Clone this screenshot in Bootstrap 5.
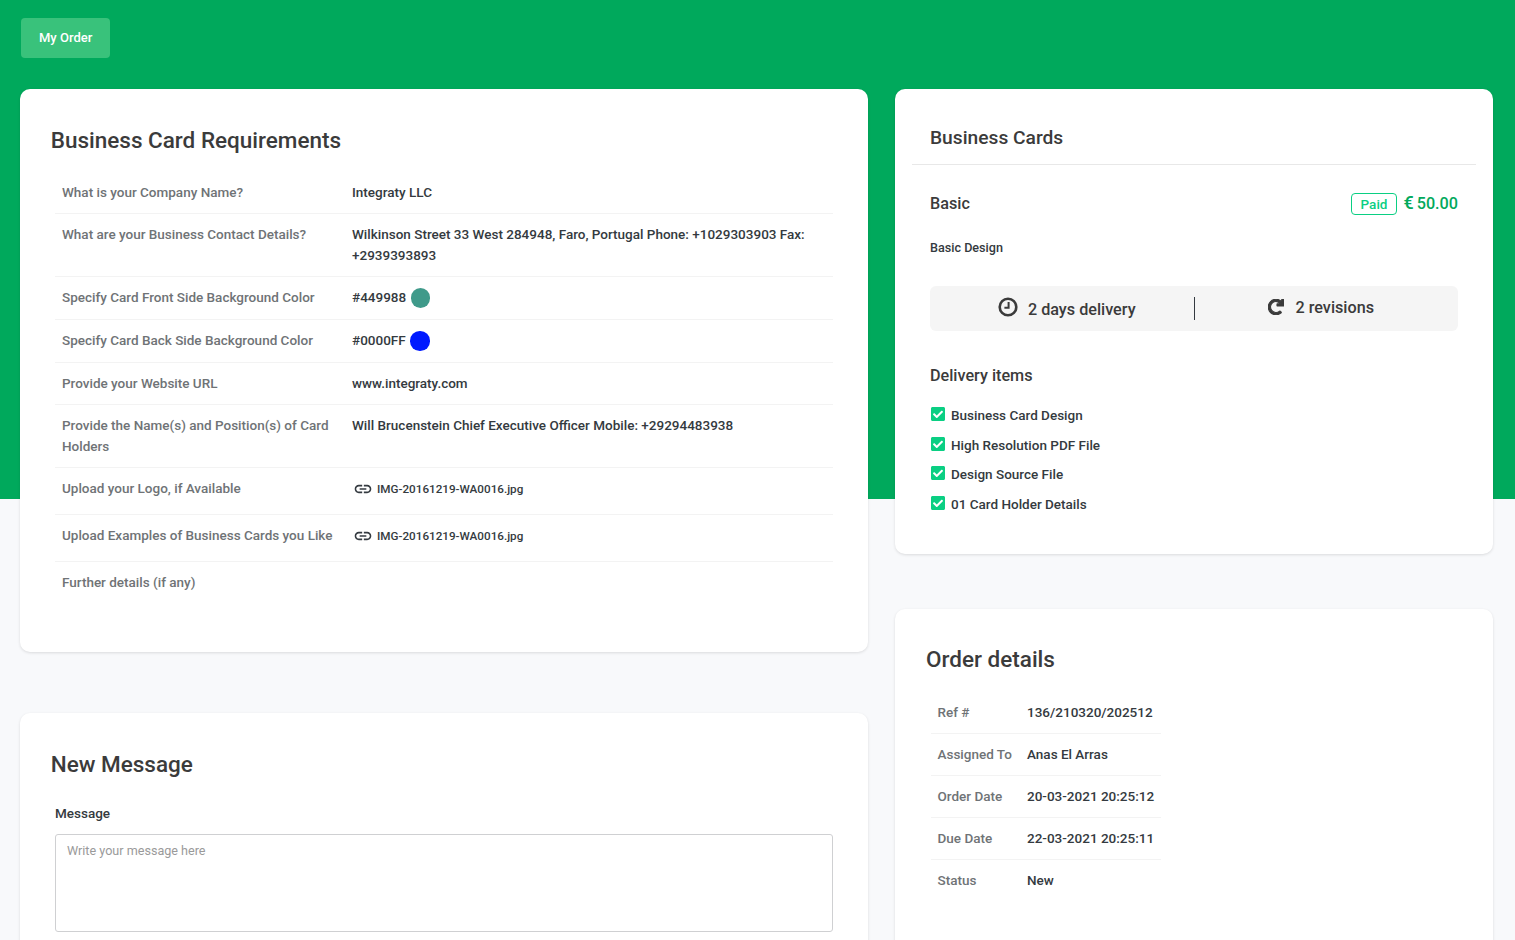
<!DOCTYPE html>
<html lang="en">
<head>
  <meta charset="UTF-8">
  <title>My Order</title>
  <meta name="viewport" content="width=device-width, initial-scale=1">
  <link href="https://cdn.jsdelivr.net/npm/bootstrap@5.3.0/dist/css/bootstrap.min.css" rel="stylesheet">
  <style>
    body { font-family: Roboto, "Liberation Sans", sans-serif; font-size: 13.5px; font-weight: 500; color: #343a40; line-height: 21px; }
    .page-wrap { background: linear-gradient(#00a95c 499px, #f8f9fb 499px); padding: 18px 22px 40px 20px; }
    .btn-order { display: inline-block; margin-left: 1px; background: #39c27b; color: #fff; font-size: 13px; font-weight: 500; line-height: 20px; padding: 10px 18px; border: 0; border-radius: 4px; }
    .columns { margin-top: 31px; gap: 27px; align-items: flex-start; }
    .col-main { width: 848px; flex: none; }
    .col-side { width: 598px; flex: none; }
    .panel { background: #fff; border: 0; border-radius: 10px; box-shadow: 0 1px 3px rgba(0,0,0,.12); }
    .panel-gap-l { margin-top: 61px; }
    .panel-gap-r { margin-top: 55px; }
    .panel-title { font-size: 22.5px; font-weight: 500; color: #3b3b3b; line-height: 28px; margin: 0; }
    .req-panel { padding: 37px 35px 41px 30.7px; height: 563px; }
    .info-table { margin: 18px 0 0 4.3px; width: 778px; border-collapse: collapse; }
    .info-table th, .info-table td { padding: 10px 7px; vertical-align: top; border-bottom: 1px solid #f3f3f3; font-weight: 500; }
    .info-table tr:last-child th, .info-table tr:last-child td { border-bottom: 0; }
    .info-table th { color: #6f7376; width: 290px; }
    .info-table td { color: #343a40; }
    .row-swatch td, .row-swatch th { padding-top: 10px; padding-bottom: 11px; }
    .row-file td, .row-file th { padding-top: 10px; padding-bottom: 15px; }
    .row-file td { padding-bottom: 14px; }
    .swatch { display: inline-block; width: 19.5px; height: 19.5px; border-radius: 50%; vertical-align: middle; margin-left: 1px; margin-top: -1px; }
    .swatch-teal { background: #3f9a8a; }
    .swatch-blue { background: #001aff; }
    .file-link { font-size: 11.7px; color: #343a40; }
    .file-link svg { width: 20px; height: 20px; margin: 0 4px 0 1px; vertical-align: -6px; fill: #343a40; }
    .msg-panel { padding: 37px 35px 40px 30.7px; }
    .msg-label { display: block; margin: 25px 0 10px 4.3px; color: #343a40; }
    .msg-input { display: block; margin-left: 4.3px; width: 778px; height: 98px; border: 1px solid #cfd0d2; border-radius: 3px; padding: 5px 11px; font-size: 12.6px; font-weight: 400; line-height: 21px; box-shadow: none; resize: none; }
    .msg-input::placeholder { color: #9a9a9a; opacity: 1; }
    .item-panel { padding: 0 17px 31px; }
    .item-head { padding: 35px 0 12px 18px; border-bottom: 1px solid #e8e8e8; font-size: 19.2px; line-height: 28px; color: #3b3b3b; }
    .item-body { padding: 0 18px; }
    .plan-row { margin-top: 27px; }
    .plan-name { font-size: 16.2px; line-height: 22px; color: #3b3b3b; }
    .paid-tag { display: inline-block; border: 1px solid #0acf83; border-radius: 4px; color: #0acf83; font-size: 13.5px; line-height: 20px; padding: 0 9px; margin-right: 6px; }
    .price { font-size: 16.2px; line-height: 22px; color: #02a95c; }
    .price-sign { font-size: 18px; margin-right: 3px; }
    .plan-desc { margin-top: 22px; font-size: 12.6px; color: #343a40; }
    .delivery-bar { margin-top: 28px; height: 45px; background: #f5f5f5; border-radius: 6px; font-size: 16.2px; color: #3b3b3b; }
    .delivery-bar > div { flex: 1; }
    .bar-left { padding-left: 10px; }
    .bar-right { padding-right: 10px; }
    .bar-left svg { width: 20px; height: 20px; margin: 0 10px 3px 0; }
    .bar-left span { margin-top: 1px; }
    .bar-right svg { width: 16px; height: 16px; margin: 0 11px 4px 0; }
    .bar-right span { margin-bottom: 3px; }
    .bar-divider { flex: none !important; width: 1px; height: 23px; background: #343a40; }
    .sub-title { margin: 34px 0 0; font-size: 16.2px; line-height: 22px; font-weight: 500; color: #3b3b3b; }
    .check-list { margin: 18px 0 0; padding: 0; list-style: none; }
    .check-list li { display: flex; align-items: flex-start; height: 29.6px; }
    .check-list svg { width: 14px; height: 16px; fill: #0acf83; margin: 1px 6px 0 1px; flex: none; }
    .details-panel { padding: 36px 31px 40px; min-height: 360px; }
    .details-table { margin: 19px 0 0 4.5px; border-collapse: collapse; width: 230.5px; }
    .details-table th, .details-table td { padding: 10px 7px; border-bottom: 1px solid #f3f3f3; font-weight: 500; white-space: nowrap; }
    .details-table tr:last-child th, .details-table tr:last-child td { border-bottom: 0; }
    .details-table th { color: #6f7376; width: 89.5px; padding-right: 0; }
    .details-table td { color: #343a40; padding-right: 0; }
  </style>
</head>
<body>

  <div class="page-wrap">
    <a class="btn-order text-decoration-none" href="#">My Order</a>

    <div class="d-flex columns">
      <!-- left column -->
      <div class="col-main">
        <div class="card panel req-panel">
          <h2 class="panel-title">Business Card Requirements</h2>
          <table class="info-table">
            <tr><th>What is your Company Name?</th><td>Integraty LLC</td></tr>
            <tr><th>What are your Business Contact Details?</th><td>Wilkinson Street 33 West 284948, Faro, Portugal Phone: +1029303903 Fax: +2939393893</td></tr>
            <tr class="row-swatch"><th>Specify Card Front Side Background Color</th><td>#449988 <span class="swatch swatch-teal"></span></td></tr>
            <tr class="row-swatch"><th>Specify Card Back Side Background Color</th><td>#0000FF <span class="swatch swatch-blue"></span></td></tr>
            <tr><th>Provide your Website URL</th><td>www.integraty.com</td></tr>
            <tr><th>Provide the Name(s) and Position(s) of Card Holders</th><td>Will Brucenstein Chief Executive Officer Mobile: +29294483938</td></tr>
            <tr class="row-file"><th>Upload your Logo, if Available</th><td><a class="file-link text-decoration-none" href="#"><svg viewBox="0 0 24 24"><path d="M3.9 12c0-1.71 1.39-3.1 3.1-3.1h4V7H7c-2.76 0-5 2.24-5 5s2.24 5 5 5h4v-1.9H7c-1.71 0-3.1-1.39-3.1-3.1zM8 13h8v-2H8v2zm9-6h-4v1.9h4c1.71 0 3.1 1.39 3.1 3.1s-1.39 3.1-3.1 3.1h-4V17h4c2.76 0 5-2.24 5-5s-2.24-5-5-5z"/></svg>IMG-20161219-WA0016.jpg</a></td></tr>
            <tr class="row-file"><th>Upload Examples of Business Cards you Like</th><td><a class="file-link text-decoration-none" href="#"><svg viewBox="0 0 24 24"><path d="M3.9 12c0-1.71 1.39-3.1 3.1-3.1h4V7H7c-2.76 0-5 2.24-5 5s2.24 5 5 5h4v-1.9H7c-1.71 0-3.1-1.39-3.1-3.1zM8 13h8v-2H8v2zm9-6h-4v1.9h4c1.71 0 3.1 1.39 3.1 3.1s-1.39 3.1-3.1 3.1h-4V17h4c2.76 0 5-2.24 5-5s-2.24-5-5-5z"/></svg>IMG-20161219-WA0016.jpg</a></td></tr>
            <tr><th>Further details (if any)</th><td></td></tr>
          </table>
        </div>

        <div class="card panel msg-panel panel-gap-l">
          <h2 class="panel-title">New Message</h2>
          <form>
            <label class="msg-label" for="msgText">Message</label>
            <textarea class="form-control msg-input" id="msgText" placeholder="Write your message here"></textarea>
          </form>
        </div>
      </div>

      <!-- right column -->
      <div class="col-side">
        <div class="card panel item-panel">
          <div class="item-head">Business Cards</div>
          <div class="item-body">
            <div class="d-flex justify-content-between align-items-center plan-row">
              <span class="plan-name">Basic</span>
              <span class="d-flex align-items-center"><span class="paid-tag">Paid</span><span class="price"><span class="price-sign">€</span>50.00</span></span>
            </div>
            <div class="plan-desc">Basic Design</div>
            <div class="d-flex align-items-center delivery-bar">
              <div class="d-flex justify-content-center align-items-center bar-left">
                <svg viewBox="0 0 20 20" fill="none" stroke="#3b3b3b"><circle cx="10" cy="10" r="8.3" stroke-width="2.6"/><path d="M10.6 5v5.8H6.4" stroke-width="2"/></svg>
                <span>2 days delivery</span>
              </div>
              <div class="bar-divider"></div>
              <div class="d-flex justify-content-center align-items-center bar-right">
                <svg viewBox="0 0 512 512" fill="#3b3b3b" stroke="#3b3b3b" stroke-width="36"><path d="M500.33 0h-47.41a12 12 0 0 0-12 12.57l4 82.76A247.42 247.42 0 0 0 256 8C119.34 8 7.9 119.53 8 256.19 8.1 393.07 119.1 504 256 504a247.1 247.1 0 0 0 166.18-63.91 12 12 0 0 0 .48-17.43l-34-34a12 12 0 0 0-16.38-.55A176 176 0 1 1 402.1 157.8l-101.53-4.87a12 12 0 0 0-12.57 12v47.41a12 12 0 0 0 12 12h200.33a12 12 0 0 0 12-12V12a12 12 0 0 0-12-12z"/></svg>
                <span>2 revisions</span>
              </div>
            </div>
            <h3 class="sub-title">Delivery items</h3>
            <ul class="check-list">
              <li><svg viewBox="0 0 448 512"><path d="M400 480H48c-26.51 0-48-21.49-48-48V80c0-26.51 21.49-48 48-48h352c26.51 0 48 21.49 48 48v352c0 26.51-21.49 48-48 48zm-204.686-98.059l184-184c6.248-6.248 6.248-16.379 0-22.627l-22.627-22.627c-6.248-6.248-16.379-6.249-22.628 0L184 302.745l-70.059-70.059c-6.248-6.248-16.379-6.248-22.628 0l-22.627 22.627c-6.248 6.248-6.248 16.379 0 22.627l104 104c6.249 6.25 16.379 6.25 22.628.001z"/></svg>Business Card Design</li>
              <li><svg viewBox="0 0 448 512"><path d="M400 480H48c-26.51 0-48-21.49-48-48V80c0-26.51 21.49-48 48-48h352c26.51 0 48 21.49 48 48v352c0 26.51-21.49 48-48 48zm-204.686-98.059l184-184c6.248-6.248 6.248-16.379 0-22.627l-22.627-22.627c-6.248-6.248-16.379-6.249-22.628 0L184 302.745l-70.059-70.059c-6.248-6.248-16.379-6.248-22.628 0l-22.627 22.627c-6.248 6.248-6.248 16.379 0 22.627l104 104c6.249 6.25 16.379 6.25 22.628.001z"/></svg>High Resolution PDF File</li>
              <li><svg viewBox="0 0 448 512"><path d="M400 480H48c-26.51 0-48-21.49-48-48V80c0-26.51 21.49-48 48-48h352c26.51 0 48 21.49 48 48v352c0 26.51-21.49 48-48 48zm-204.686-98.059l184-184c6.248-6.248 6.248-16.379 0-22.627l-22.627-22.627c-6.248-6.248-16.379-6.249-22.628 0L184 302.745l-70.059-70.059c-6.248-6.248-16.379-6.248-22.628 0l-22.627 22.627c-6.248 6.248-6.248 16.379 0 22.627l104 104c6.249 6.25 16.379 6.25 22.628.001z"/></svg>Design Source File</li>
              <li><svg viewBox="0 0 448 512"><path d="M400 480H48c-26.51 0-48-21.49-48-48V80c0-26.51 21.49-48 48-48h352c26.51 0 48 21.49 48 48v352c0 26.51-21.49 48-48 48zm-204.686-98.059l184-184c6.248-6.248 6.248-16.379 0-22.627l-22.627-22.627c-6.248-6.248-16.379-6.249-22.628 0L184 302.745l-70.059-70.059c-6.248-6.248-16.379-6.248-22.628 0l-22.627 22.627c-6.248 6.248-6.248 16.379 0 22.627l104 104c6.249 6.25 16.379 6.25 22.628.001z"/></svg>01 Card Holder Details</li>
            </ul>
          </div>
        </div>

        <div class="card panel details-panel panel-gap-r">
          <h2 class="panel-title">Order details</h2>
          <table class="details-table">
            <tr><th>Ref #</th><td>136/210320/202512</td></tr>
            <tr><th>Assigned To</th><td>Anas El Arras</td></tr>
            <tr><th>Order Date</th><td>20-03-2021 20:25:12</td></tr>
            <tr><th>Due Date</th><td>22-03-2021 20:25:11</td></tr>
            <tr><th>Status</th><td>New</td></tr>
          </table>
        </div>
      </div>
    </div>
  </div>

  <script src="https://cdn.jsdelivr.net/npm/bootstrap@5.3.0/dist/js/bootstrap.bundle.min.js"></script>
</body>
</html>
